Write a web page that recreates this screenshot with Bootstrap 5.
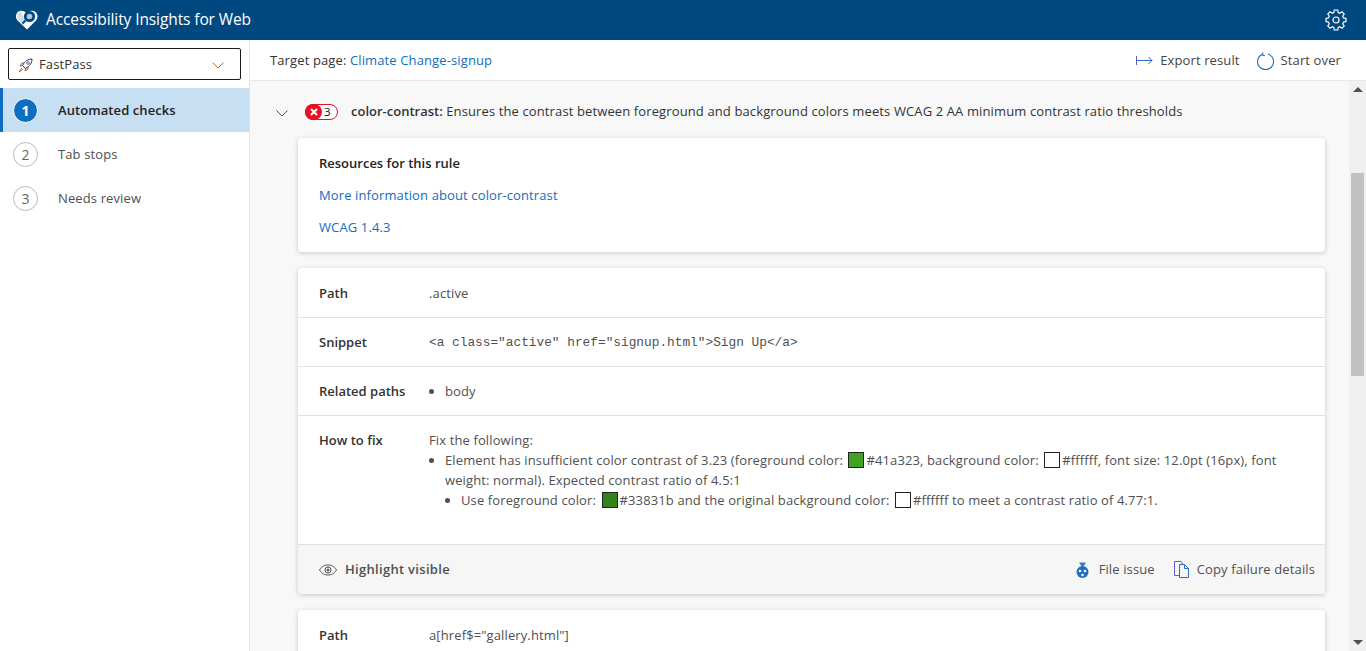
<!DOCTYPE html>
<html lang="en">
<head>
    <meta charset="UTF-8">
    <meta name="viewport" content="width=device-width, initial-scale=1.0">
    <title>Accessibility Insights for Web</title>
    <link href="https://cdn.jsdelivr.net/npm/bootstrap@5.3.0/dist/css/bootstrap.min.css" rel="stylesheet">
    <style>
        html, body { height: 651px; overflow: hidden; }
        body { font-family: "Open Sans", "Noto Sans", sans-serif; font-size: 13px; color: #333; letter-spacing: .12px; }
        a { color: #106ebe; text-decoration: none; }

        .top-bar { height: 40px; background: #004880; color: #fff; padding: 0 15px; }
        .top-title { font-size: 15.5px; margin-left: 7px; letter-spacing: -.1px; }
        .app-body { height: 611px; }

        /* Menu de navegacao */
        .side-nav { width: 250px; border-right: 1px solid #e4e4e4; }
        .mode-select { height: 32px; margin: 8px; width: 233px; border: 1px solid #1b1b1b; border-radius: 2px; padding: 2px 16px 0 9px; color: #333; }
        .nav-step { height: 44px; padding-left: 13px; color: #505050; }
        .nav-step.current { background: #c7dff3; border-left: 3px solid #106ebe; padding-left: 10px; color: #222; font-weight: 600; letter-spacing: .08px; }
        .step-num { width: 25px; height: 25px; border: 1px solid #bbb; border-radius: 50%; margin-right: 20px; font-size: 14px; color: #666; background: #fff; }
        .step-label { padding-top: 2px; }
        .current .step-num { background: #106ebe; border-color: #fff; color: #fff; font-weight: 700; box-shadow: 0 0 0 1px #c7dff3; }

        .cmd-bar { height: 41px; padding: 1px 25px 0 20px; border-bottom: 1px solid #e8e8e8; flex: none; }
        .cmd-item { color: #444; }
        .start-item { margin-left: 17px; }
        .start-icon { margin-right: 7px; }
        .scroll-wrap { min-height: 0; background: #f8f8f8; overflow: hidden; }
        .content-pane { padding: 0 24px 0 26px; overflow: hidden; }
        .rule-head { height: 57px; padding-top: 4px; flex: none; }
        .rule-head b { letter-spacing: 0; }
        .rule-chevron { margin-top: 3px; }
        .count-pill { width: 33px; height: 16px; border: 1px solid #e81123; border-radius: 8px; margin: 0 13px 0 17px; background: #fff; color: #111; font-size: 11.5px; }
        .count-x { width: 17px; height: 16px; margin: -1px 2px -1px -1px; border-radius: 8px; background: #e81123; }
        .rule-card { margin-left: 22px; border: 0; border-radius: 4px; box-shadow: 0 1px 5px rgba(0,0,0,.2); margin-bottom: 16px; flex: none; }
        .res-card { height: 114px; padding: 16px 21px; }
        .res-title { font-weight: 600; color: #222; margin-bottom: 14px; line-height: 18px; letter-spacing: 0; }
        .res-link { line-height: 18px; margin-bottom: 14px; }
        .info-row { height: 49px; border-bottom: 1px solid #e0e0e0; padding-left: 21px; padding-top: 15px; line-height: 18px; color: #505050; }
        .info-row:first-child { height: 50px; padding-top: 16px; }
        .info-row.fix-row { height: 129px; padding-top: 14px; }
        .fix-row .info-label { padding-top: 1px; }
        .fix-text { line-height: 20px; padding-right: 30px; }
        .info-label { width: 110px; flex: none; font-weight: 600; color: #333; letter-spacing: 0; }
        .snippet { font-family: "Liberation Mono", monospace; font-size: 12.8px; letter-spacing: 0; padding-top: 1px; }
        .fix-list { margin: 0; padding-left: 16px; line-height: 20px; }
        .path-list { margin: 0; padding-left: 16px; }
        .fix-list ul { padding-left: 16px; margin: 0; list-style-type: disc; }
        .swatch { display: inline-block; width: 16px; height: 16px; border: 1px solid #222; vertical-align: -3px; margin: 0 2px 0 2px; }
        .sw-a { background: #41a323; }
        .sw-b { background: #33831b; }
        .sw-w { background: #fff; }
        .card-foot { height: 49px; background: #f6f6f6; padding: 0 10px 0 21px; border-radius: 0 0 4px 4px; color: #505050; }
        .foot-strong { letter-spacing: .3px; }
        .file-link { margin-right: 19px; }
        .bug-icon { margin-right: 10px; }
        .fake-scroll { width: 17px; background: #f0f0f0; flex: none; }
        .scroll-thumb { width: 13px; height: 203px; background: #c1c1c1; margin: 81px auto 0; }
        .scroll-arrow { width: 0; height: 0; border-left: 5px solid transparent; border-right: 5px solid transparent; margin: 6px auto 0; }
        .scroll-arrow.up { border-bottom: 5px solid #505050; }
        .scroll-arrow.down { border-top: 5px solid #505050; margin: auto auto 6px; }
        .gear-icon { margin-right: 4px; }
        .export-icon { margin-right: 7px; }
        .rocket-icon { margin-right: 6px; }
    </style>
</head>
<body>
    <!-- Header -->
    <header class="top-bar d-flex align-items-center">
        <svg width="24" height="20" viewBox="0 0 24 20">
            <path d="M12 19.500 2.500 10.500C-.5 7.500 1 1 6 .8c2.400-.1 4.200 1 5.500 2.500C13 1.400 15 .4 17.500 .8c5 .6 6.500 6.700 3.500 9.700z" fill="#fff"/>
            <path d="M3 9.500C1 6 3 2 6 1.800L10 9 7.500 14.500z" fill="#d5dde5"/>
            <circle cx="14.500" cy="6.500" r="5.600" fill="#004880"/>
            <circle cx="14.500" cy="6.500" r="2.800" fill="#a9cbe4"/>
            <path d="M10.500 10.500 7.500 13.500" stroke="#004880" stroke-width="2.200"/>
        </svg>
        <span class="top-title">Accessibility Insights for Web</span>
        <svg class="ms-auto gear-icon" width="22" height="22" viewBox="-1 -1 22 22" fill="none" stroke="#fff" stroke-width="1.200">
            <circle cx="10" cy="10" r="3"/>
            <path d="M8.300 0h3.400l.5 2.500 1.600.7 2.200-1.400 2.200 2.300-1.400 2.100.7 1.700 2.500.5v3.200l-2.500.5-.7 1.700 1.400 2.100-2.200 2.300-2.200-1.400-1.600.7-.5 2.500H8.300l-.5-2.500-1.600-.7-2.200 1.400-2.200-2.300 1.400-2.100-.7-1.700L0 11.600V8.400l2.500-.5.7-1.700-1.400-2.100L4 1.800l2.200 1.400 1.600-.7z"/>
        </svg>
    </header>

    <div class="app-body d-flex">
        <!-- Menu lateral -->
        <nav class="side-nav flex-shrink-0">
            <div class="mode-select d-flex align-items-center">
                <svg class="rocket-icon" width="15" height="15" viewBox="0 0 15 15" fill="none" stroke="#333">
                    <path d="M14 1C10 1 7 3 4.500 7.500l3 3C12 8 14 5 14 1z"/>
                    <circle cx="10" cy="5" r="1.300" stroke="#5b5fc7"/>
                    <path d="M4.500 7.500 2 8l2-3h2M7.500 10.500 7 13l3-2V9M3.500 10.500 1 14l3.500-2.500" stroke="#b4552d"/>
                </svg>
                <span>FastPass</span>
                <svg class="ms-auto" width="12" height="7" viewBox="0 0 12 7" fill="none" stroke="#b4692d"><path d="M.5.500 6 6l5.500-5.500"/></svg>
            </div>
            <div class="nav-step current d-flex align-items-center"><span class="step-num d-flex align-items-center justify-content-center">1</span><span class="step-label">Automated checks</span></div>
            <div class="nav-step d-flex align-items-center"><span class="step-num d-flex align-items-center justify-content-center">2</span><span class="step-label">Tab stops</span></div>
            <div class="nav-step d-flex align-items-center"><span class="step-num d-flex align-items-center justify-content-center">3</span><span class="step-label">Needs review</span></div>
        </nav>

        <main class="flex-grow-1 d-flex flex-column" style="min-width:0">
            <div class="cmd-bar d-flex align-items-center">
                <span>Target page: <a href="#">Climate Change-signup</a></span>
                <span class="cmd-item ms-auto d-flex align-items-center">
                    <svg class="export-icon" width="17" height="9" viewBox="0 0 17 9" fill="none" stroke="#2b6fc0"><path d="M.5 0v9" stroke="#5b5fc7"/><path d="M1 4.500h15M12.500 1 16 4.500 12.500 8"/></svg>
                    Export result
                </span>
                <span class="cmd-item start-item d-flex align-items-center">
                    <svg class="start-icon" width="17" height="18" viewBox="0 0 17 18" fill="none" stroke="#2b6fc0" stroke-width="1.100"><path d="M5.500 2.200A8 8 0 1 0 11 2M6 .3 5.500 3l2.500.8"/></svg>
                    Start over
                </span>
            </div>

            <div class="scroll-wrap flex-grow-1 d-flex">
                <div class="content-pane flex-grow-1 d-flex flex-column">
                    <div class="rule-head d-flex align-items-center">
                        <svg class="rule-chevron flex-shrink-0" width="12" height="7" viewBox="0 0 12 7" fill="none" stroke="#505050"><path d="M.5.500 6 6l5.500-5.500"/></svg>
                        <span class="count-pill d-flex align-items-center flex-shrink-0">
                            <span class="count-x d-flex align-items-center justify-content-center">
                                <svg width="8" height="8" viewBox="0 0 8 8" stroke="#fff" stroke-width="2"><path d="M1 1l6 6M7 1 1 7"/></svg>
                            </span>3
                        </span>
                        <span><b class="fw-semibold">color-contrast:</b> Ensures the contrast between foreground and background colors meets WCAG 2 AA minimum contrast ratio thresholds</span>
                    </div>

                    <div class="card rule-card res-card">
                        <div class="res-title">Resources for this rule</div>
                        <div class="res-link"><a href="#">More information about color-contrast</a></div>
                        <div class="res-link"><a href="#">WCAG 1.4.3</a></div>
                    </div>

                    <div class="card rule-card">
                        <div class="info-row d-flex"><div class="info-label">Path</div><div>.active</div></div>
                        <div class="info-row d-flex"><div class="info-label">Snippet</div><div class="snippet">&lt;a class="active" href="signup.html"&gt;Sign Up&lt;/a&gt;</div></div>
                        <div class="info-row d-flex"><div class="info-label">Related paths</div><ul class="path-list"><li>body</li></ul></div>
                        <div class="info-row fix-row d-flex">
                            <div class="info-label">How to fix</div>
                            <div class="fix-text">
                                Fix the following:
                                <ul class="fix-list">
                                    <li>Element has insufficient color contrast of 3.23 (foreground color: <span class="swatch sw-a"></span>#41a323, background color: <span class="swatch sw-w"></span>#ffffff, font size: 12.0pt (16px), font weight: normal). Expected contrast ratio of 4.5:1
                                        <ul><li>Use foreground color: <span class="swatch sw-b"></span>#33831b and the original background color: <span class="swatch sw-w"></span>#ffffff to meet a contrast ratio of 4.77:1.</li></ul>
                                    </li>
                                </ul>
                            </div>
                        </div>
                        <div class="card-foot d-flex align-items-center">
                            <svg class="me-2" width="18" height="12" viewBox="0 0 18 12" fill="none" stroke="#505050"><path d="M.5 6C3 2 6 1 9 1s6 1 8.500 5C15 10 12 11 9 11S3 10 .5 6z"/><circle cx="9" cy="6" r="3"/><circle cx="9" cy="6" r="1" fill="#505050"/></svg>
                            <span class="fw-semibold foot-strong">Highlight visible</span>
                            <span class="ms-auto d-flex align-items-center file-link">
                                <svg class="bug-icon" width="13" height="16" viewBox="0 0 13 16"><path d="M3 .5h7L8 3.500v1H5v-1z" fill="#3a7bc8"/><circle cx="6.500" cy="10" r="6" fill="#1f6fc0"/><circle cx="4" cy="9" r="1.300" fill="#fff"/><circle cx="9" cy="9" r="1.300" fill="#fff"/><circle cx="6.500" cy="13" r="1.300" fill="#fff"/></svg>
                                File issue
                            </span>
                            <span class="d-flex align-items-center">
                                <svg class="me-2" width="15" height="17" viewBox="0 0 15 17" fill="none" stroke="#2b6fc0"><path d="M5.500 3.500h5l4 4v9h-9z"/><path d="M10.500 3.500v4h4"/><path d="M5.500 14.500h-5V.5H7l2 3" stroke="#5b5fc7"/></svg>
                                Copy failure details
                            </span>
                        </div>
                    </div>

                    <div class="card rule-card">
                        <div class="info-row d-flex"><div class="info-label">Path</div><div>a[href$="gallery.html"]</div></div>
                    </div>
                </div>

                <div class="fake-scroll d-flex flex-column">
                    <div class="scroll-arrow up"></div>
                    <div class="scroll-thumb"></div>
                    <div class="scroll-arrow down"></div>
                </div>
            </div>
        </main>
    </div>
    <script src="https://cdn.jsdelivr.net/npm/bootstrap@5.3.0/dist/js/bootstrap.bundle.min.js"></script>
</body>
</html>
